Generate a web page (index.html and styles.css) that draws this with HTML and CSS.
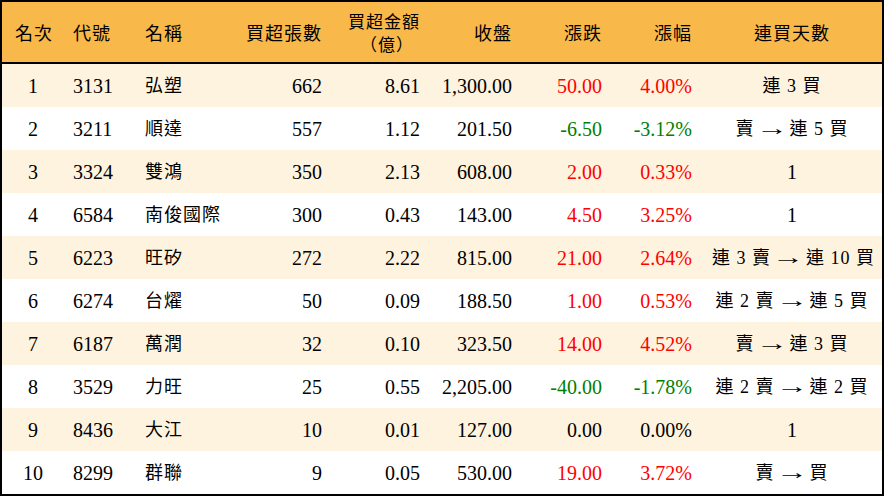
FILE: index.html
```html
<!DOCTYPE html>
<html lang="zh-Hant">
<head>
<meta charset="utf-8">
<link rel="stylesheet" href="styles.css">
</head>
<body>
<table class="rank">
  <colgroup>
    <col class="c1"><col class="c2"><col class="c3"><col class="c4"><col class="c5"><col class="c6"><col class="c7"><col class="c8"><col class="c9">
  </colgroup>
  <thead>
    <tr>
      <th class="ctr">名次</th>
      <th class="lft">代號</th>
      <th class="lft">名稱</th>
      <th class="rgt">買超張數</th>
      <th class="rgt"><span class="two"><span class="ln">買超金額</span><span class="ln unit">（億）</span></span></th>
      <th class="rgt">收盤</th>
      <th class="rgt">漲跌</th>
      <th class="rgt">漲幅</th>
      <th class="ctr">連買天數</th>
    </tr>
  </thead>
  <tbody>
    <tr><td class="ctr">1</td><td class="lft">3131</td><td class="lft cjk">弘塑</td><td class="rgt">662</td><td class="rgt">8.61</td><td class="rgt">1,300.00</td><td class="rgt up">50.00</td><td class="rgt up">4.00%</td><td class="ctr cjk">連 3 買</td></tr>
    <tr><td class="ctr">2</td><td class="lft">3211</td><td class="lft cjk">順達</td><td class="rgt">557</td><td class="rgt">1.12</td><td class="rgt">201.50</td><td class="rgt dn">-6.50</td><td class="rgt dn">-3.12%</td><td class="ctr cjk">賣<span class="arr"><span class="g">→</span></span>連 5 買</td></tr>
    <tr><td class="ctr">3</td><td class="lft">3324</td><td class="lft cjk">雙鴻</td><td class="rgt">350</td><td class="rgt">2.13</td><td class="rgt">608.00</td><td class="rgt up">2.00</td><td class="rgt up">0.33%</td><td class="ctr">1</td></tr>
    <tr><td class="ctr">4</td><td class="lft">6584</td><td class="lft cjk">南俊國際</td><td class="rgt">300</td><td class="rgt">0.43</td><td class="rgt">143.00</td><td class="rgt up">4.50</td><td class="rgt up">3.25%</td><td class="ctr">1</td></tr>
    <tr><td class="ctr">5</td><td class="lft">6223</td><td class="lft cjk">旺矽</td><td class="rgt">272</td><td class="rgt">2.22</td><td class="rgt">815.00</td><td class="rgt up">21.00</td><td class="rgt up">2.64%</td><td class="ctr cjk">連 3 賣<span class="arr"><span class="g">→</span></span>連 10 買</td></tr>
    <tr><td class="ctr">6</td><td class="lft">6274</td><td class="lft cjk">台燿</td><td class="rgt">50</td><td class="rgt">0.09</td><td class="rgt">188.50</td><td class="rgt up">1.00</td><td class="rgt up">0.53%</td><td class="ctr cjk">連 2 賣<span class="arr"><span class="g">→</span></span>連 5 買</td></tr>
    <tr><td class="ctr">7</td><td class="lft">6187</td><td class="lft cjk">萬潤</td><td class="rgt">32</td><td class="rgt">0.10</td><td class="rgt">323.50</td><td class="rgt up">14.00</td><td class="rgt up">4.52%</td><td class="ctr cjk">賣<span class="arr"><span class="g">→</span></span>連 3 買</td></tr>
    <tr><td class="ctr">8</td><td class="lft">3529</td><td class="lft cjk">力旺</td><td class="rgt">25</td><td class="rgt">0.55</td><td class="rgt">2,205.00</td><td class="rgt dn">-40.00</td><td class="rgt dn">-1.78%</td><td class="ctr cjk">連 2 賣<span class="arr"><span class="g">→</span></span>連 2 買</td></tr>
    <tr><td class="ctr">9</td><td class="lft">8436</td><td class="lft cjk">大江</td><td class="rgt">10</td><td class="rgt">0.01</td><td class="rgt">127.00</td><td class="rgt">0.00</td><td class="rgt">0.00%</td><td class="ctr">1</td></tr>
    <tr><td class="ctr">10</td><td class="lft">8299</td><td class="lft cjk">群聯</td><td class="rgt">9</td><td class="rgt">0.05</td><td class="rgt">530.00</td><td class="rgt up">19.00</td><td class="rgt up">3.72%</td><td class="ctr cjk">賣<span class="arr"><span class="g">→</span></span>買</td></tr>
  </tbody>
</table>
</body>
</html>
```

FILE: styles.css
```css
html, body {
  margin: 0;
  padding: 0;
  background: #ffffff;
}

.rank {
  width: 884px;
  border-collapse: separate;
  border-spacing: 0;
  table-layout: fixed;
  border: 2px solid #000;
  border-bottom-width: 3px;
  font-family: "Liberation Serif", "Noto Sans CJK TC", serif;
  font-size: 20px;
  color: #000;
}

.c1 { width: 60px; }
.c2 { width: 72px; }
.c3 { width: 98px; }
.c4 { width: 100px; }
.c5 { width: 98px; }
.c6 { width: 92px; }
.c7 { width: 90px; }
.c8 { width: 90px; }
.c9 { width: 180px; }

.rank th {
  background: #f9b84a;
  height: 60px;
  padding: 0 10px;
  font-weight: normal;
  font-size: 18px;
  letter-spacing: 1px;
  border-bottom: 2px solid #000;
  line-height: 22px;
  font-family: "Noto Sans CJK TC", sans-serif;
}

.rank td {
  height: 43px;
  padding: 0 10px;
  line-height: 22px;
  white-space: nowrap;
}

.rank th:first-child { padding: 0 0 0 4px; }
.rank td:first-child { padding: 0 0 0 2px; }
.rank th.lft, .rank td.lft { padding-left: 11px; }

.rank tbody tr:nth-child(odd) td { background: #fef3de; }
.rank tbody tr:nth-child(even) td { background: #ffffff; }

.ctr { text-align: center; }
.lft { text-align: left; }
.rgt { text-align: right; }

.cjk {
  font-size: 18px;
  letter-spacing: 1px;
}

.two {
  display: inline-flex;
  flex-direction: column;
  align-items: flex-end;
  gap: 0;
  margin-top: -4px;
}

.ln {
  display: block;
  line-height: 23px;
  font-size: 17px;
}

.unit {
  padding-right: 6px;
}

.arr {
  display: inline-block;
  width: 20px;
  margin: 0 8px 0 7px;
  text-align: center;
  letter-spacing: 0;
  font-family: "Liberation Serif", serif;
  font-size: 20px;
}

.arr .g {
  display: inline-block;
  transform: scaleX(1.6);
}

.up { color: #ff0000; }
.dn { color: #008000; }
```
